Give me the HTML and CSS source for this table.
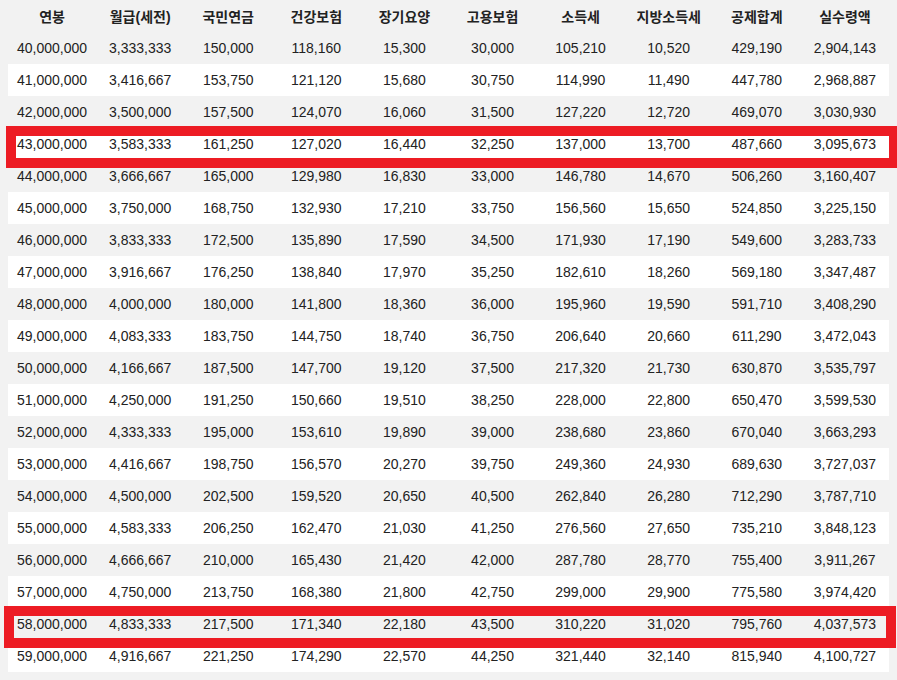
FILE: index.html
```html
<!DOCTYPE html>
<html lang="ko">
<head>
<meta charset="utf-8">
<title>연봉 실수령액</title>
<link rel="stylesheet" href="styles.css">
</head>
<body>
<div class="sheet">
<table class="pay">
<thead>
<tr><th>연봉</th><th>월급(세전)</th><th>국민연금</th><th>건강보험</th><th>장기요양</th><th>고용보험</th><th>소득세</th><th>지방소득세</th><th>공제합계</th><th>실수령액</th></tr>
</thead>
<tbody>
<tr><td>40,000,000</td><td>3,333,333</td><td>150,000</td><td>118,160</td><td>15,300</td><td>30,000</td><td>105,210</td><td>10,520</td><td>429,190</td><td>2,904,143</td></tr>
<tr><td>41,000,000</td><td>3,416,667</td><td>153,750</td><td>121,120</td><td>15,680</td><td>30,750</td><td>114,990</td><td>11,490</td><td>447,780</td><td>2,968,887</td></tr>
<tr><td>42,000,000</td><td>3,500,000</td><td>157,500</td><td>124,070</td><td>16,060</td><td>31,500</td><td>127,220</td><td>12,720</td><td>469,070</td><td>3,030,930</td></tr>
<tr><td>43,000,000</td><td>3,583,333</td><td>161,250</td><td>127,020</td><td>16,440</td><td>32,250</td><td>137,000</td><td>13,700</td><td>487,660</td><td>3,095,673</td></tr>
<tr><td>44,000,000</td><td>3,666,667</td><td>165,000</td><td>129,980</td><td>16,830</td><td>33,000</td><td>146,780</td><td>14,670</td><td>506,260</td><td>3,160,407</td></tr>
<tr><td>45,000,000</td><td>3,750,000</td><td>168,750</td><td>132,930</td><td>17,210</td><td>33,750</td><td>156,560</td><td>15,650</td><td>524,850</td><td>3,225,150</td></tr>
<tr><td>46,000,000</td><td>3,833,333</td><td>172,500</td><td>135,890</td><td>17,590</td><td>34,500</td><td>171,930</td><td>17,190</td><td>549,600</td><td>3,283,733</td></tr>
<tr><td>47,000,000</td><td>3,916,667</td><td>176,250</td><td>138,840</td><td>17,970</td><td>35,250</td><td>182,610</td><td>18,260</td><td>569,180</td><td>3,347,487</td></tr>
<tr><td>48,000,000</td><td>4,000,000</td><td>180,000</td><td>141,800</td><td>18,360</td><td>36,000</td><td>195,960</td><td>19,590</td><td>591,710</td><td>3,408,290</td></tr>
<tr><td>49,000,000</td><td>4,083,333</td><td>183,750</td><td>144,750</td><td>18,740</td><td>36,750</td><td>206,640</td><td>20,660</td><td>611,290</td><td>3,472,043</td></tr>
<tr><td>50,000,000</td><td>4,166,667</td><td>187,500</td><td>147,700</td><td>19,120</td><td>37,500</td><td>217,320</td><td>21,730</td><td>630,870</td><td>3,535,797</td></tr>
<tr><td>51,000,000</td><td>4,250,000</td><td>191,250</td><td>150,660</td><td>19,510</td><td>38,250</td><td>228,000</td><td>22,800</td><td>650,470</td><td>3,599,530</td></tr>
<tr><td>52,000,000</td><td>4,333,333</td><td>195,000</td><td>153,610</td><td>19,890</td><td>39,000</td><td>238,680</td><td>23,860</td><td>670,040</td><td>3,663,293</td></tr>
<tr><td>53,000,000</td><td>4,416,667</td><td>198,750</td><td>156,570</td><td>20,270</td><td>39,750</td><td>249,360</td><td>24,930</td><td>689,630</td><td>3,727,037</td></tr>
<tr><td>54,000,000</td><td>4,500,000</td><td>202,500</td><td>159,520</td><td>20,650</td><td>40,500</td><td>262,840</td><td>26,280</td><td>712,290</td><td>3,787,710</td></tr>
<tr><td>55,000,000</td><td>4,583,333</td><td>206,250</td><td>162,470</td><td>21,030</td><td>41,250</td><td>276,560</td><td>27,650</td><td>735,210</td><td>3,848,123</td></tr>
<tr><td>56,000,000</td><td>4,666,667</td><td>210,000</td><td>165,430</td><td>21,420</td><td>42,000</td><td>287,780</td><td>28,770</td><td>755,400</td><td>3,911,267</td></tr>
<tr><td>57,000,000</td><td>4,750,000</td><td>213,750</td><td>168,380</td><td>21,800</td><td>42,750</td><td>299,000</td><td>29,900</td><td>775,580</td><td>3,974,420</td></tr>
<tr><td>58,000,000</td><td>4,833,333</td><td>217,500</td><td>171,340</td><td>22,180</td><td>43,500</td><td>310,220</td><td>31,020</td><td>795,760</td><td>4,037,573</td></tr>
<tr><td>59,000,000</td><td>4,916,667</td><td>221,250</td><td>174,290</td><td>22,570</td><td>44,250</td><td>321,440</td><td>32,140</td><td>815,940</td><td>4,100,727</td></tr>
</tbody>
</table>
<div class="mark mark-a"></div>
<div class="mark mark-b"></div>
</div>
</body>
</html>
```

FILE: styles.css
```css
html, body {
  margin: 0;
  padding: 0;
  background: #f2f2f2;
  overflow: hidden;
}

body {
  padding: 0 8px 8px 8px;
  font-family: "Liberation Sans", Arial, "Noto Sans CJK KR", sans-serif;
  font-size: 14px;
  color: #222;
}

.sheet {
  position: relative;
}

.pay {
  width: 100%;
  border-collapse: collapse;
  table-layout: fixed;
}

.pay th,
.pay td {
  height: 32px;
  padding: 0;
  text-align: center;
  vertical-align: middle;
  white-space: nowrap;
}

.pay th {
  font-weight: bold;
  font-family: "Liberation Sans", "Noto Sans CJK KR", sans-serif;
  color: #222;
}

.pay tbody tr:nth-child(even) {
  background: #ffffff;
}

.pay tbody tr:nth-child(odd) {
  background: #f2f2f2;
}

.mark {
  position: absolute;
  box-sizing: border-box;
  border: 10px solid #ed1c24;
  height: 42px;
}

.mark-a {
  left: -2px;
  top: 126px;
  width: 891px;
  border-right-width: 8px;
}

.mark-b {
  left: -4px;
  top: 606px;
  width: 892px;
}
```
